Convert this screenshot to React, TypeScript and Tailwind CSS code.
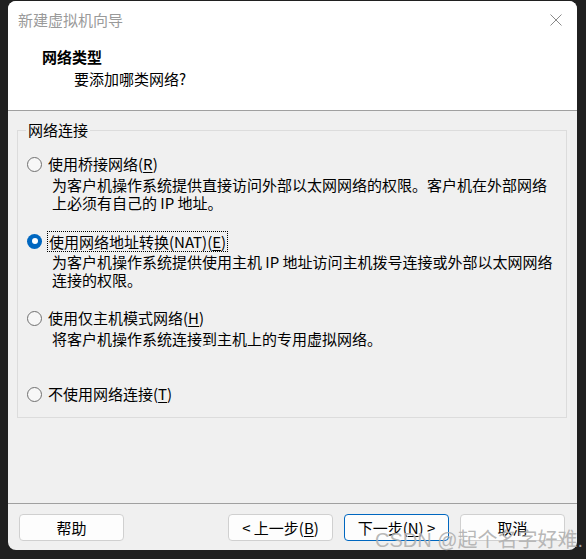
import React from 'react';

interface NetOption {
  label: string;
  hotkey: string;
  desc: string[];
  checked?: boolean;
  gap: string;
}

const options: NetOption[] = [
  {
    label: '使用桥接网络',
    hotkey: 'R',
    desc: ['为客户机操作系统提供直接访问外部以太网网络的权限。客户机在外部网络', '上必须有自己的 IP 地址。'],
    gap: '',
  },
  {
    label: '使用网络地址转换(NAT)',
    hotkey: 'E',
    desc: ['为客户机操作系统提供使用主机 IP 地址访问主机拨号连接或外部以太网网络', '连接的权限。'],
    checked: true,
    gap: 'mt-[19px]',
  },
  {
    label: '使用仅主机模式网络',
    hotkey: 'H',
    desc: ['将客户机操作系统连接到主机上的专用虚拟网络。'],
    gap: 'mt-[19px]',
  },
  {
    label: '不使用网络连接',
    hotkey: 'T',
    desc: [],
    gap: 'mt-[36px]',
  },
];

function Radio({ checked }: { checked?: boolean }) {
  if (checked) {
    return (
      <span className="w-[15px] h-[15px] rounded-full bg-[#0067c0] flex items-center justify-center shrink-0">
        <span className="w-[6px] h-[6px] rounded-full bg-white" />
      </span>
    );
  }
  return <span className="w-[15px] h-[15px] rounded-full border border-[#707070] bg-[#f7f7f7] shrink-0" />;
}

function Hotkey({ k }: { k: string }) {
  return (
    <>
      (<span className="underline underline-offset-2">{k}</span>)
    </>
  );
}

function DialogButton({ children, primary }: { children: React.ReactNode; primary?: boolean }) {
  return (
    <button
      className={`w-[105px] h-[27px] rounded-[4px] bg-[#fdfdfd] text-[15px] leading-none text-black flex items-center justify-center border ${
        primary ? 'border-[#0067c0]' : 'border-[#d0d0d0]'
      }`}
    >
      {children}
    </button>
  );
}

export default function App() {
  return (
    <div
      className="w-[586px] h-[559px] bg-[#202020] pl-[8px] pt-[1px] relative overflow-hidden"
      style={{ fontFamily: '"Noto Sans CJK SC", "Noto Sans", sans-serif' }}
    >
      <div className="w-[569px] h-[549px] rounded-[8px] overflow-hidden bg-[#f0f0f0] flex flex-col text-black">
        {/* title + header */}
        <div className="h-[110px] bg-white border-b border-[#a0a0a0] flex flex-col shrink-0">
          <div className="h-[38px] flex items-center justify-between pl-[10px] pr-[15px]">
            <span className="text-[15px] text-[#9a9a9a]">新建虚拟机向导</span>
            <svg width="12" height="12" viewBox="0 0 12 12" className="text-[#8a8a8a]">
              <path d="M0.5 0.5 L11.5 11.5 M11.5 0.5 L0.5 11.5" stroke="currentColor" strokeWidth="1" fill="none" />
            </svg>
          </div>
          <div className="pt-[8px] text-[15px] leading-[20px]">
            <div className="pl-[34px] font-bold">网络类型</div>
            <div className="pl-[66px] mt-[2px]">要添加哪类网络?</div>
          </div>
        </div>

        {/* body */}
        <div className="flex-1">
          <div className="relative ml-[9px] mt-[19px] w-[550px] border border-[#dcdcdc] pt-[23px] pb-[13px] text-[15px]">
            <span className="absolute left-[8px] -top-[11px] px-[2px] bg-[#f0f0f0] leading-[20px]">网络连接</span>
            {options.map((opt) => (
              <div key={opt.hotkey} className={opt.gap}>
                <div className="flex items-center h-[20px] pl-[9px]">
                  <Radio checked={opt.checked} />
                  {opt.checked ? (
                    <span className="ml-[5px] px-[1px] h-[21px] leading-[19px] border border-dotted border-black whitespace-nowrap">
                      {opt.label}
                      <Hotkey k={opt.hotkey} />
                    </span>
                  ) : (
                    <span className="ml-[6px] leading-[20px] whitespace-nowrap">
                      {opt.label}
                      <Hotkey k={opt.hotkey} />
                    </span>
                  )}
                </div>
                {opt.desc.length > 0 && (
                  <div className="mt-[2px] pl-[34px] leading-[18px] whitespace-nowrap">
                    {opt.desc.map((line) => (
                      <div key={line}>{line}</div>
                    ))}
                  </div>
                )}
              </div>
            ))}
          </div>
        </div>

        {/* footer */}
        <div className="h-[47px] border-t border-[#a0a0a0] pt-[10px] pl-[11px] pr-[12px] flex justify-between shrink-0">
          <DialogButton>帮助</DialogButton>
          <div className="flex gap-[11px]">
            <DialogButton>
              &lt; 上一步(<span className="underline underline-offset-2">B</span>)
            </DialogButton>
            <DialogButton primary>
              下一步(<span className="underline underline-offset-2">N</span>) &gt;
            </DialogButton>
            <DialogButton>取消</DialogButton>
          </div>
        </div>
      </div>

      {/* watermark */}
      <div
        className="absolute left-[375px] top-[527px] text-[20px] leading-[26px] text-[rgba(175,175,175,0.9)] whitespace-nowrap pointer-events-none"
        style={{ fontFamily: '"Liberation Sans", "Noto Sans CJK SC", sans-serif' }}
      >
        CSDN @起个名字好难.
      </div>
    </div>
  );
}
